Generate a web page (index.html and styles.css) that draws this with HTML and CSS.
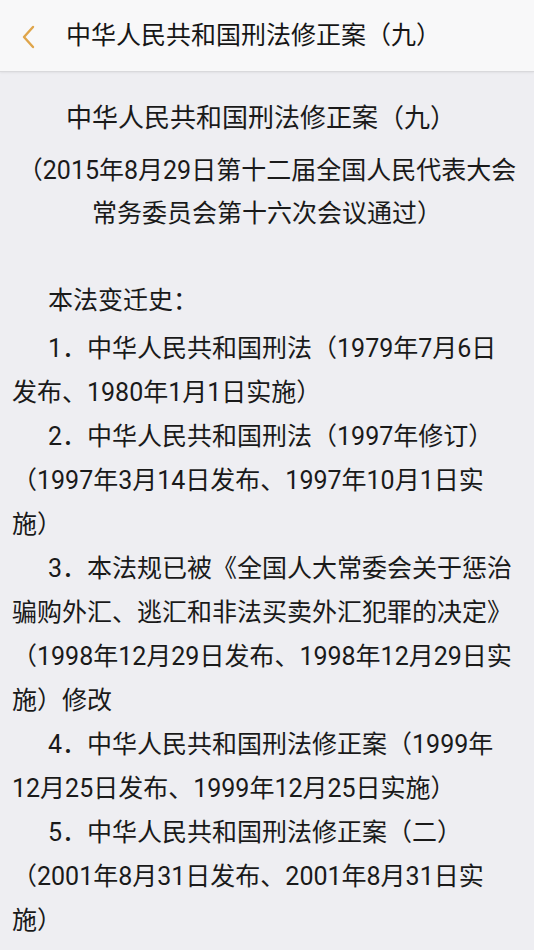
FILE: index.html
```html
<!DOCTYPE html>
<html lang="zh-CN">
<head>
<meta charset="utf-8">
<title>中华人民共和国刑法修正案（九）</title>
<link rel="stylesheet" href="styles.css">
</head>
<body>
<header class="topbar">
  <svg class="back" width="14" height="24" viewBox="0 0 14 24"><polyline points="11,2 2,12 11,22" fill="none" stroke="#dfa54a" stroke-width="2.4" stroke-linecap="round" stroke-linejoin="round"/></svg>
  <h1 class="topbar-title">中华人民共和国刑法修正案（九）</h1>
</header>
<main class="content">
  <h2 class="doc-title">中华人民共和国刑法修正案（九）</h2>
  <p class="doc-sub">（2015年8月29日第十二届全国人民代表大会<br>常务委员会第十六次会议通过）</p>
  <p class="para first">本法变迁史：</p>
  <div class="list">
    <p class="para">1．中华人民共和国刑法（1979年7月6日<br>发布、1980年1月1日实施）</p>
    <p class="para">2．中华人民共和国刑法（1997年修订）<br>（1997年3月14日发布、1997年10月1日实<br>施）</p>
    <p class="para">3．本法规已被《全国人大常委会关于惩治<br>骗购外汇、逃汇和非法买卖外汇犯罪的决定》<br>（1998年12月29日发布、1998年12月29日实<br>施）修改</p>
    <p class="para">4．中华人民共和国刑法修正案（1999年<br>12月25日发布、1999年12月25日实施）</p>
    <p class="para">5．中华人民共和国刑法修正案（二）<br>（2001年8月31日发布、2001年8月31日实<br>施）</p>
  </div>
</main>
</body>
</html>
```
FILE: styles.css
```css
html, body {
  margin: 0;
  padding: 0;
}
body {
  background: #eeeef2;
  color: #1a1a1a;
  font-family: Roboto, "Noto Sans CJK SC", sans-serif;
  width: 534px;
  height: 950px;
  overflow: hidden;
}
.topbar {
  height: 72px;
  background: #f8f8f9;
  border-bottom: 1px solid #d9d9dc;
  box-shadow: 0 1px 2px rgba(0,0,0,0.06);
  display: flex;
  align-items: center;
  padding-left: 22px;
  box-sizing: border-box;
}
.back {
  display: block;
  margin-top: 2px;
}
.topbar-title {
  margin: 0 0 0 30px;
  font-size: 25px;
  font-weight: 400;
  line-height: 1;
  color: #161616;
}
.content {
  padding: 24px 12px 0 12px;
}
.doc-title {
  margin: 0;
  padding-right: 12px;
  font-size: 26px;
  font-weight: 400;
  line-height: 44px;
  text-align: center;
}
.doc-sub {
  margin: 9px 0 44px 0;
  font-size: 25px;
  line-height: 43px;
  text-align: center;
  white-space: nowrap;
}
.para {
  margin: 0;
  font-size: 25px;
  line-height: 44px;
  text-indent: 36px;
  white-space: nowrap;
}
.list {
  margin-top: 4px;
}
```
